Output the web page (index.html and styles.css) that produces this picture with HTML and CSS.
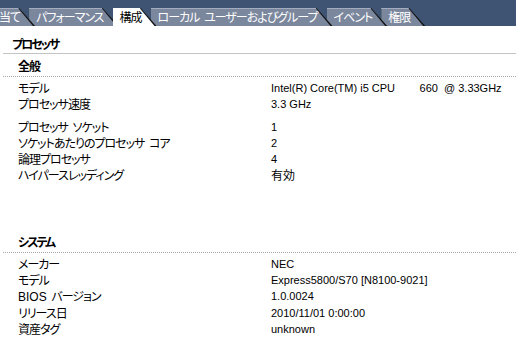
FILE: index.html
```html
<!DOCTYPE html>
<html lang="ja">
<head>
<meta charset="utf-8">
<title>構成</title>
<link rel="stylesheet" href="styles.css">
</head>
<body>

<div class="tabbar">
	<span class="tab tab--first">当て</span>
	<span class="tab">パフォーマンス</span>
	<span class="tab tab--active">構成</span>
	<span class="tab">ローカル ユーザーおよびグループ</span>
	<span class="tab">イベント</span>
	<span class="tab">権限</span>
</div>

<div class="page">
	<h1 class="page__title">プロセッサ</h1>

	<!-- general -->
	<h2 class="section__title">全般</h2>
	<div class="props">
		<span class="props__label">モデル</span>
		<span class="props__value">Intel(R) Core(TM) i5 CPU        660  @ 3.33GHz</span>
		<span class="props__label">プロセッサ速度</span>
		<span class="props__value">3.3 GHz</span>
	</div>
	<div class="props props--next">
		<span class="props__label">プロセッサ ソケット</span>
		<span class="props__value">1</span>
		<span class="props__label">ソケットあたりのプロセッサ コア</span>
		<span class="props__value">2</span>
		<span class="props__label">論理プロセッサ</span>
		<span class="props__value">4</span>
		<span class="props__label">ハイパースレッディング</span>
		<span class="props__value props__value--jp">有効</span>
	</div>

	<!-- system -->
	<h2 class="section__title section__title--spaced">システム</h2>
	<div class="props">
		<span class="props__label">メーカー</span>
		<span class="props__value">NEC</span>
		<span class="props__label">モデル</span>
		<span class="props__value">Express5800/S70 [N8100-9021]</span>
		<span class="props__label"><span class="latin">BIOS</span> バージョン</span>
		<span class="props__value">1.0.0024</span>
		<span class="props__label">リリース日</span>
		<span class="props__value">2010/11/01 0:00:00</span>
		<span class="props__label">資産タグ</span>
		<span class="props__value">unknown</span>
	</div>
</div>

</body>
</html>
```

FILE: styles.css
```css
body {
	margin: 0;
	background: #fff;
	color: #000;
	font-family: "Noto Sans CJK JP", sans-serif;
	font-size: 12px;
	font-feature-settings: "palt";
}

/* tab strip */
.tabbar {
	display: flex;
	align-items: flex-end;
	height: 26px;
	background: #3e5472;
	overflow: hidden;
}
.tab {
	position: relative;
	display: block;
	height: 18px;
	line-height: 18px;
	padding: 0 15px 0 7px;
	margin-right: -6px;
	color: #fff;
	letter-spacing: -1px;
	word-spacing: 3px;
	white-space: nowrap;
}
.tab::before,
.tab::after {
	content: '';
	position: absolute;
	top: 0;
	left: 0;
	right: 0;
	bottom: 0;
	z-index: -1;
}
.tab::before {
	background: #111;
	clip-path: polygon(0 0, calc(100% - 16px) 0, 100% 100%, 0 100%);
}
.tab::after {
	background: #7b879d;
	border-top: 1px solid #a3adbf;
	clip-path: polygon(0 0, calc(100% - 17px) 0, calc(100% - 2px) 100%, 0 100%);
}
.tab:nth-child(1) { z-index: 6; }
.tab:nth-child(2) { z-index: 5; }
.tab:nth-child(4) { z-index: 3; }
.tab:nth-child(5) { z-index: 2; }
.tab:nth-child(6) { z-index: 1; }
.tab--first {
	margin-left: -8px;
}
.tab--active {
	z-index: 7;
	color: #000;
}
.tab--active::after {
	background: #fff;
	border-top-color: #fff;
}

/* content */
.page {
	padding: 10px 0 0 3px;
}
.page__title {
	margin: 0;
	padding: 0 0 1px 9px;
	font-size: 12px;
	line-height: 16px;
	font-weight: bold;
	letter-spacing: -2px;
	border-bottom: 1px solid #c4c4c4;
}
.section__title {
	margin: 4px 0 0;
	padding: 0 0 2px 15px;
	font-size: 12px;
	line-height: 16px;
	font-weight: bold;
	letter-spacing: -1px;
	border-bottom: 1px dotted #a8a8a8;
}
.section__title--spaced {
	margin-top: 51px;
	letter-spacing: -2px;
}
.props {
	display: grid;
	grid-template-columns: 253px 1fr;
	padding: 3px 0 0 15px;
	line-height: 16px;
}
.props--next {
	padding-top: 7px;
}
.props__label {
	letter-spacing: -1px;
	word-spacing: 3px;
}
.props__value {
	font-family: "Liberation Sans", sans-serif;
	font-size: 11px;
	white-space: pre;
}
.props__value--jp {
	font-family: "Noto Sans CJK JP", sans-serif;
	font-size: 12px;
}
.latin {
	font-family: "Liberation Sans", sans-serif;
	letter-spacing: 0;
}
```
